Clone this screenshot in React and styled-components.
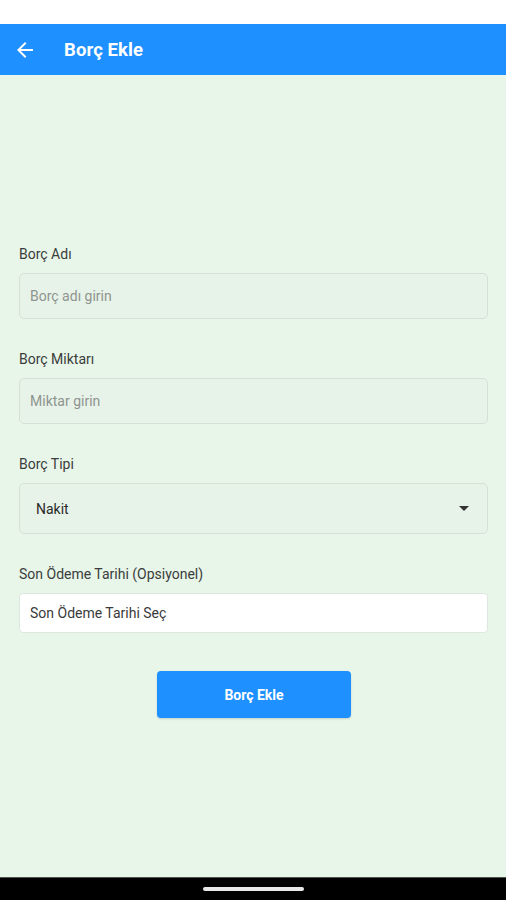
import React from "react";
import styled, { createGlobalStyle } from "styled-components";

const GlobalStyle = createGlobalStyle`
  html, body {
    margin: 0;
    padding: 0;
    background: #e8f5e9;
  }
  body {
    font-family: Roboto, "Liberation Sans", Arial, sans-serif;
  }
`;

const Screen = styled.div`
  width: 100%;
  height: 900px;
  display: flex;
  flex-direction: column;
  background-color: #e8f5e9;
`;

const StatusBar = styled.div`
  height: 24px;
  background-color: #ffffff;
`;

const AppBar = styled.div`
  height: 51px;
  background-color: #1e90ff;
  display: flex;
  align-items: center;
  padding-left: 13px;
  box-sizing: border-box;
`;

const BackButton = styled.svg`
  width: 24px;
  height: 24px;
  fill: #ffffff;
  flex-shrink: 0;
`;

const Title = styled.h1`
  margin: 0 0 0 27px;
  color: #ffffff;
  font-size: 18.5px;
  font-weight: 700;
  letter-spacing: 0.1px;
`;

const Content = styled.div`
  flex: 1;
  display: flex;
  flex-direction: column;
  padding: 171px 18px 0 19px;
`;

const Field = styled.div`
  display: flex;
  flex-direction: column;
  margin-bottom: 32px;
`;

const Label = styled.label`
  font-size: 14px;
  line-height: 16px;
  color: #3a3d3b;
  margin-bottom: 11px;
`;

const TextBox = styled.input`
  height: 46px;
  box-sizing: border-box;
  border: 1px solid #d6e0d7;
  border-radius: 5px;
  background-color: #e7f3e8;
  padding: 0 10px;
  font-family: inherit;
  font-size: 14px;
  color: #333;
  outline: none;

  &::placeholder {
    color: #8f9490;
  }
`;

const SelectBox = styled.div`
  height: 51px;
  box-sizing: border-box;
  border: 1px solid #d6e0d7;
  border-radius: 5px;
  background-color: #e7f3e8;
  display: flex;
  align-items: center;
  justify-content: space-between;
  padding: 0 18px 0 16px;
  font-size: 14px;
  color: #2a2a2a;
`;

const Caret = styled.svg`
  width: 10px;
  height: 6px;
  fill: #333;
`;

const DateBox = styled.div`
  height: 40px;
  box-sizing: border-box;
  border: 1px solid #dfe5df;
  border-radius: 4px;
  background-color: #ffffff;
  display: flex;
  align-items: center;
  padding: 0 10px;
  font-size: 14px;
  color: #3a3a3a;
`;

const SubmitButton = styled.button`
  align-self: center;
  margin-top: 6px;
  width: 194px;
  height: 47px;
  border: none;
  border-radius: 4px;
  background-color: #1e90ff;
  color: #ffffff;
  font-family: inherit;
  font-size: 14px;
  font-weight: 700;
  box-shadow: 0 1px 2px rgba(0, 0, 0, 0.15);
  margin-left: 1px;
`;

const NavBar = styled.div`
  height: 22px;
  background-color: #000;
  border-top: 1px solid #4a524b;
  display: flex;
  justify-content: center;
  align-items: center;
`;

const HomeHandle = styled.div`
  width: 101px;
  height: 4px;
  border-radius: 2px;
  background-color: #e8e8e8;
`;

const App = () => {
  return (
    <Screen>
      <GlobalStyle />
      <StatusBar />
      <AppBar>
        <BackButton viewBox="0 0 24 24">
          <path d="M20 11H7.83l5.59-5.59L12 4l-8 8 8 8 1.41-1.41L7.83 13H20v-2z" />
        </BackButton>
        <Title>Borç Ekle</Title>
      </AppBar>
      <Content>
        <Field>
          <Label>Borç Adı</Label>
          <TextBox placeholder="Borç adı girin" />
        </Field>
        <Field>
          <Label>Borç Miktarı</Label>
          <TextBox placeholder="Miktar girin" />
        </Field>
        <Field>
          <Label>Borç Tipi</Label>
          <SelectBox>
            <span>Nakit</span>
            <Caret viewBox="0 0 10 6">
              <path d="M0 0h10L5 5z" />
            </Caret>
          </SelectBox>
        </Field>
        <Field>
          <Label>Son Ödeme Tarihi (Opsiyonel)</Label>
          <DateBox>Son Ödeme Tarihi Seç</DateBox>
        </Field>
        <SubmitButton>Borç Ekle</SubmitButton>
      </Content>
      <NavBar>
        <HomeHandle />
      </NavBar>
    </Screen>
  );
};

export default App;
